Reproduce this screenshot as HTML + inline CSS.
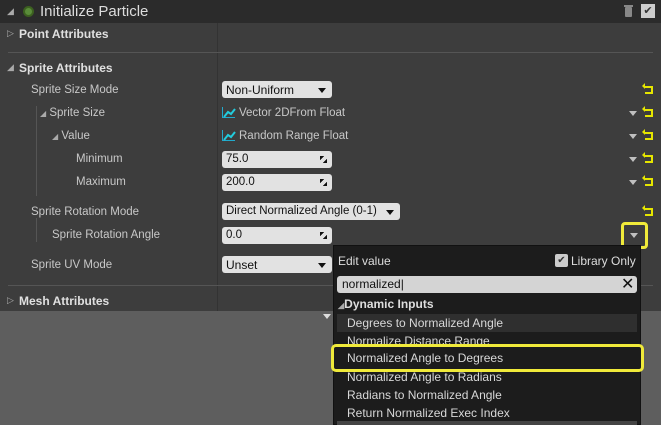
<!DOCTYPE html>
<html><head><style>
*{margin:0;padding:0;box-sizing:border-box}
body{width:661px;height:425px;overflow:hidden;background:#5e5e5e;font-family:"Liberation Sans",sans-serif;position:relative;font-size:11px;color:#c8c8c8}
.a{position:absolute;white-space:nowrap}
.b{font-weight:bold;color:#e0e0e0;font-size:12px}
.in{position:absolute;left:222px;width:110px;height:17px;background:#e2e2e2;border-radius:3px;color:#111;font-size:11.5px;padding:2px 0 0 4px}
.dd::after{content:"";position:absolute;right:6px;top:7px;border:4px solid transparent;border-top:5px solid #111;border-bottom:none}
.sp::after{content:"";position:absolute;right:5px;top:5px;width:7px;height:7px;background:linear-gradient(135deg,#111 0 30%,transparent 30% 70%,#111 70%)}
.rv{position:absolute;left:645px;width:8px;height:8px;border:2px solid #e6e600;border-left:none}
.rv::before{content:"";position:absolute;left:-3px;top:-5px;border:3px solid transparent;border-right:3px solid #e6e600;border-left:none}
.tri{position:absolute;left:629px;border:4px solid transparent;border-top:5px solid #c0c0c0;border-bottom:none}
.ic{display:inline-block;width:13px;height:11px;border-left:1px solid #2ac;border-bottom:1px solid #2ac;margin-right:4px;vertical-align:-2px;position:relative}
.ic svg{position:absolute;left:0;top:0}
.pi{position:absolute;left:347px;font-size:12px;color:#d8d8d8}
.lb{font-size:11.5px}
</style></head><body>
<div class="a" style="left:0;top:0;width:661px;height:311px;background:#3d3d3d"></div>
<div class="a" style="left:0;top:0;width:661px;height:23px;background:#2b2b2b"></div>
<div class="a" style="left:7px;top:6px;font-size:9px;color:#aaa">◢</div>
<div class="a" style="left:23px;top:6px;width:11px;height:11px;border-radius:50%;background:#5a8c3a;border:2px solid #3c6020"></div>
<div class="a" style="left:40px;top:3px;font-size:15px;color:#ddd">Initialize Particle</div>
<div class="a" style="left:625px;top:7px;width:7px;height:10px;background:#888;border-radius:1px"></div>
<div class="a" style="left:624px;top:5px;width:9px;height:2px;background:#888"></div>
<div class="a" style="left:641px;top:4px;width:14px;height:14px;background:#ccc;color:#333;font-size:11px;text-align:center;line-height:14px">✔</div>
<div class="a" style="left:217px;top:23px;width:1px;height:288px;background:#333"></div>
<div class="a" style="left:8px;top:52px;width:645px;height:1px;background:#555"></div>
<div class="a" style="left:8px;top:285px;width:645px;height:1px;background:#555"></div>
<div class="a" style="left:36px;top:218px;width:1px;height:24px;background:#555"></div>
<div class="a" style="left:36px;top:106px;width:1px;height:90px;background:#555"></div>
<div class="a" style="left:7px;top:28px;font-size:9px;color:#aaa">▷</div>
<div class="a b" style="left:19px;top:27px">Point Attributes</div>
<div class="a" style="left:7px;top:62px;font-size:9px;color:#aaa">◢</div>
<div class="a b" style="left:19px;top:61px">Sprite Attributes</div>
<div class="a lb" style="left:31px;top:84px">Sprite Size Mode</div>
<div class="a lb" style="left:40px;top:107px"><span style="font-size:8px;color:#aaa">◢</span> Sprite Size</div>
<div class="a lb" style="left:52px;top:130px"><span style="font-size:8px;color:#aaa">◢</span> Value</div>
<div class="a lb" style="left:76px;top:153px">Minimum</div>
<div class="a lb" style="left:76px;top:176px">Maximum</div>
<div class="a lb" style="left:31px;top:206px">Sprite Rotation Mode</div>
<div class="a lb" style="left:52px;top:229px">Sprite Rotation Angle</div>
<div class="a lb" style="left:31px;top:259px">Sprite UV Mode</div>
<div class="a" style="left:7px;top:295px;font-size:9px;color:#aaa">▷</div>
<div class="a b" style="left:19px;top:294px">Mesh Attributes</div>
<div class="in dd" style="top:81px;width:110px;font-size:12px">Non-Uniform</div>
<div class="a lb" style="left:222px;top:107px"><span class="ic"><svg width="13" height="11"><path d="M1 10 L5 5 L8 7 L12 2" stroke="#2cd" stroke-width="2" fill="none"/></svg></span>Vector 2DFrom Float</div>
<div class="a lb" style="left:222px;top:130px"><span class="ic"><svg width="13" height="11"><path d="M1 10 L5 5 L8 7 L12 2" stroke="#2cd" stroke-width="2" fill="none"/></svg></span>Random Range Float</div>
<div class="in sp" style="top:151px">75.0</div>
<div class="in sp" style="top:174px">200.0</div>
<div class="in dd" style="top:203px;width:178px">Direct Normalized Angle (0-1)</div>
<div class="in sp" style="top:227px">0.0</div>
<div class="in dd" style="top:256px;width:110px;font-size:12px">Unset</div>
<div class="rv" style="top:86px"></div>
<div class="rv" style="top:109px"></div><div class="tri" style="top:111px"></div>
<div class="rv" style="top:132px"></div><div class="tri" style="top:134px"></div>
<div class="rv" style="top:155px"></div><div class="tri" style="top:157px"></div>
<div class="rv" style="top:178px"></div><div class="tri" style="top:180px"></div>
<div class="rv" style="top:208px"></div>
<div class="a" style="left:621px;top:222px;width:27px;height:27px;border:3px solid #f0ea3a;border-radius:4px"></div>
<div class="tri" style="top:233px;left:630px"></div>
<div class="a" style="left:323px;top:314px;border:4px solid transparent;border-top:5px solid #ddd"></div>
<div class="a" style="left:333px;top:245px;width:308px;height:180px;background:#1c1c1c;border:1px solid #111"></div>
<div class="a" style="left:338px;top:254px;font-size:12px;color:#ddd">Edit value</div>
<div class="a" style="left:555px;top:254px;width:13px;height:13px;background:#ccc;border-radius:2px;color:#333;font-size:10px;text-align:center;line-height:13px">✔</div>
<div class="a" style="left:571px;top:254px;font-size:12px;color:#ddd">Library Only</div>
<div class="a" style="left:337px;top:276px;width:300px;height:17px;background:#d4d4d4;border-radius:3px;color:#111;font-size:12px;padding:1px 0 0 5px">normalized|</div>
<div class="a" style="left:621px;top:274px;font-size:16px;color:#111">✕</div>
<div class="a" style="left:338px;top:297px;font-size:12px;font-weight:bold;color:#ddd"><span style="font-size:8px;color:#aaa">◢</span>Dynamic Inputs</div>
<div class="a" style="left:337px;top:314px;width:300px;height:18px;background:#2f2f2f"></div>
<div class="pi" style="top:316px">Degrees to Normalized Angle</div>
<div class="pi" style="top:334px">Normalize Distance Range</div>
<div class="pi" style="top:370px">Normalized Angle to Radians</div>
<div class="pi" style="top:388px">Radians to Normalized Angle</div>
<div class="pi" style="top:406px">Return Normalized Exec Index</div>
<div class="a" style="left:331px;top:344px;width:313px;height:28px;background:#1c1c1c;border:3px solid #f0ea3a;border-radius:5px"></div>
<div class="pi" style="top:351px">Normalized Angle to Degrees</div>
<div class="a" style="left:337px;top:421px;width:300px;height:4px;background:#444"></div>
</body></html>
